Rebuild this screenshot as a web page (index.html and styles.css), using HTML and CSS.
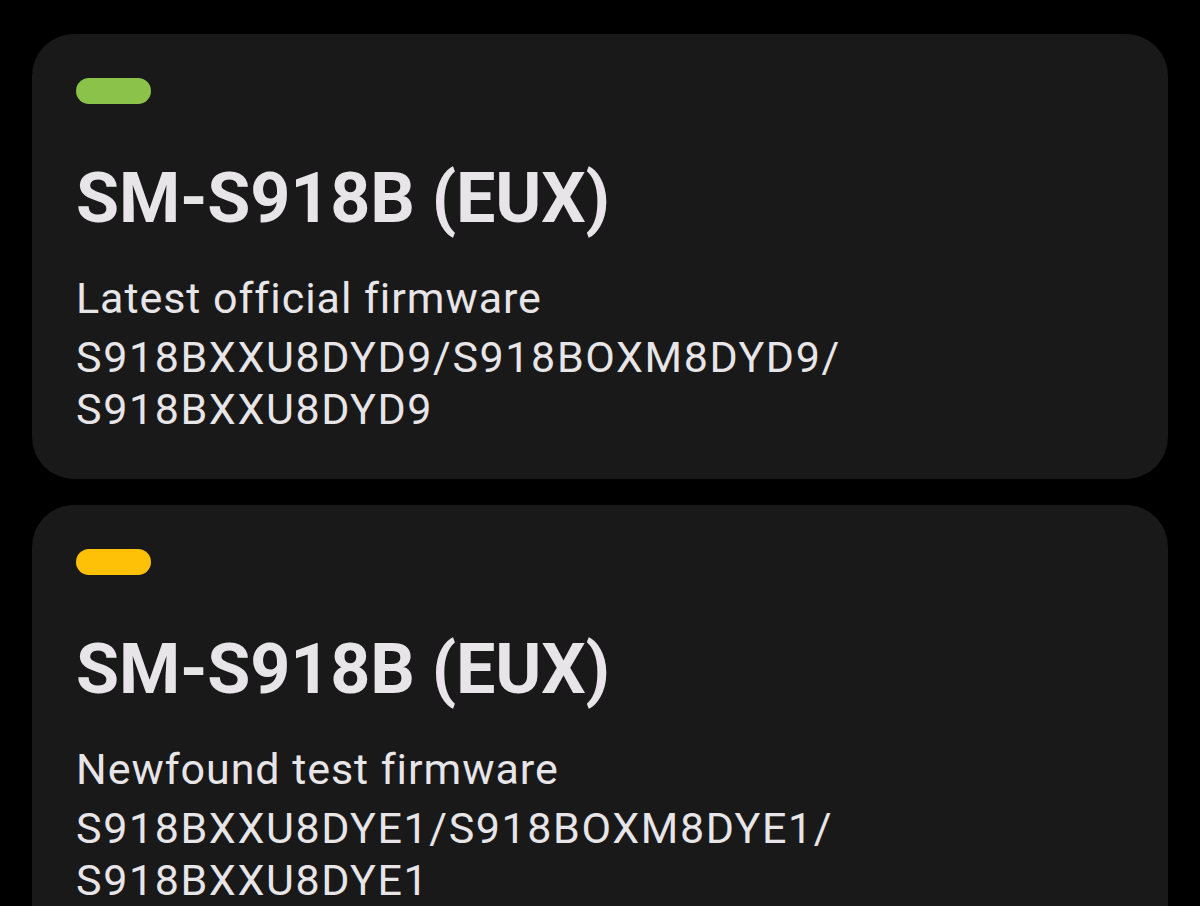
FILE: index.html
```html
<!DOCTYPE html>
<html lang="en">
<head>
    <meta charset="UTF-8">
    <meta name="viewport" content="width=device-width, initial-scale=1.0">
    <title>Firmware</title>
    <link rel="stylesheet" href="styles.css">
</head>
<body>
    <div class="list">
        <div class="card">
            <div class="pill pill-green"></div>
            <div class="model">SM-S918B (EUX)</div>
            <div class="info">
                <div class="label">Latest official firmware</div>
                <div class="code">S918BXXU8DYD9/S918BOXM8DYD9/</div>
                <div class="code">S918BXXU8DYD9</div>
            </div>
        </div>

        <div class="card">
            <div class="pill pill-yellow"></div>
            <div class="model">SM-S918B (EUX)</div>
            <div class="info">
                <div class="label">Newfound test firmware</div>
                <div class="code">S918BXXU8DYE1/S918BOXM8DYE1/</div>
                <div class="code">S918BXXU8DYE1</div>
            </div>
        </div>
    </div>
</body>
</html>
```

FILE: styles.css
```css
body {
    margin: 0;
    background-color: black;
    font-family: Roboto, "Noto Sans", sans-serif;
    color: #e8e5e8;
    height: 906px;
    overflow: hidden;
}

.list {
    display: flex;
    flex-direction: column;
    gap: 26px;
    padding: 34px 32px 0 32px;
}

.card {
    background-color: #191919;
    border-radius: 42px;
    padding: 44px;
}

.pill {
    width: 75px;
    height: 26px;
    border-radius: 13px;
}

.pill-green {
    background-color: #8bc34a;
}

.pill-yellow {
    background-color: #ffc107;
}

.model {
    margin-top: 52px;
    font-size: 70px;
    font-weight: 700;
    line-height: 84px;
    letter-spacing: -0.2px;
}

.info {
    margin-top: 31px;
    font-size: 43px;
}

.label {
    line-height: 55px;
    letter-spacing: 0.95px;
    margin-bottom: 5px;
}

.code {
    line-height: 52px;
    letter-spacing: 1.6px;
}
```
